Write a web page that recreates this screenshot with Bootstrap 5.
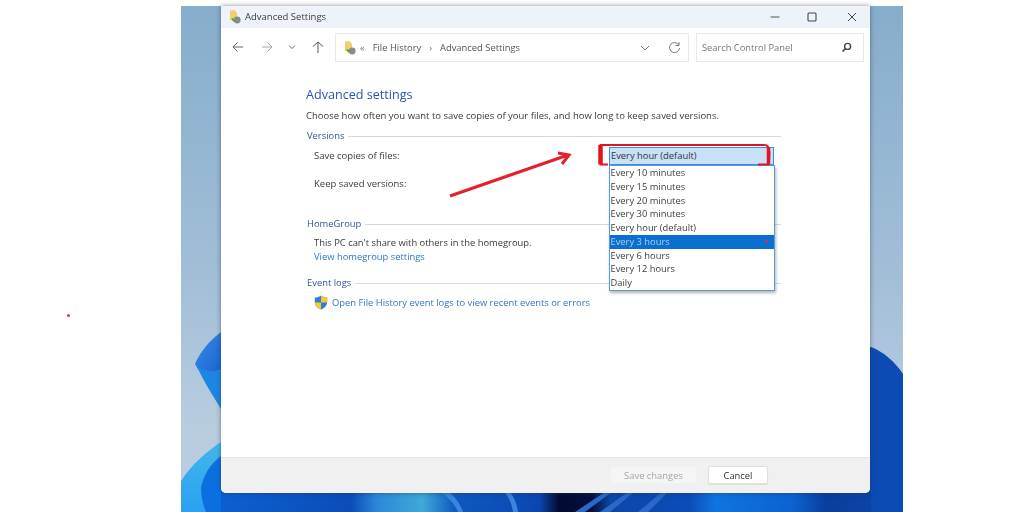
<!DOCTYPE html>
<html lang="en">
<head>
<meta charset="utf-8">
<title>Advanced Settings</title>
<link rel="stylesheet" href="https://cdn.jsdelivr.net/npm/bootstrap@5.3.0/dist/css/bootstrap.min.css">
<style>
html,body{height:512px;overflow:hidden;background:#fff}
body{font-family:"Open Sans","Noto Sans",sans-serif;font-size:9.4px;line-height:14px;color:#3a3a3a;position:relative}
.stray-dot{position:absolute;left:66.500px;top:313.500px;width:3px;height:3px;border-radius:50%;background:#e8303a}
.desk{position:absolute;left:181px;top:6px;width:722px;height:506px}
.wall{position:absolute;inset:0;width:722px;height:506px}
.win{position:relative;margin-left:40px;width:649px;height:487px;background:#fff;border-radius:0 0 5px 5px;box-shadow:0 0 5px rgba(40,50,70,.55);overflow:hidden;filter:blur(.3px)}
.tbar{height:22px;background:#eef3f9;padding-left:8px;font-size:9.5px}
.tbar-title{margin-left:4px}
.ctl{position:absolute;top:5px;width:12px;height:12px}
.ctl-min{left:548px}.ctl-max{left:585px}.ctl-close{left:625px}
.navline{height:39px;padding-top:5px}
.navbtns{width:114px;height:29px}
.navslot{position:absolute;top:12px;width:14px;height:14px}
.nav-back{left:10px}.nav-fwd{left:39px}.nav-down{left:64px}.nav-up{left:90px}
.addr{width:354px;height:29px;border:1px solid #e6e9ed;padding:0 0 0 8px;position:relative}
.addr-down{position:absolute;left:303px;top:8px}
.addr-ref{position:absolute;left:332px;top:7px}
.srch{width:168px;height:29px;border:1px solid #e6e9ed;margin-left:7px;padding:0 11px 0 5px;color:#777;font-size:9.3px}
.crumb{color:#555}
.mainpane{padding-left:85px;position:relative}
.pg-title{font-size:12.6px;line-height:16px;color:#2a52b3;font-weight:400;margin:20px 0 0}
.pg-desc{margin:6px 0 0;line-height:14px;font-size:9.51px}
.grp{color:#33549f;font-size:9.4px;line-height:14px;padding-left:1px;margin-right:89px}
.grp-1{margin-top:6px}.grp-2{margin-top:26px}.grp-3{margin-top:12px}
.grp-line{height:1px;background:#d6d9dd;margin-left:4px;flex:1 1 auto}
.indent{padding-left:8px}
.gap-hg{margin-top:5px}.gap-ev{margin-top:5px}
.link-hg{color:#2f78c4;text-decoration:none}
.sel-row{position:relative;height:34px;padding-top:6px;font-size:9.5px}
.keep-row{font-size:9.5px}
.sel{position:absolute;left:303px;top:4px;width:165px;height:18px;background:#c6e1f8;border:1px solid #3f8edb;padding-left:1px;line-height:16px;color:#333;font-size:9.35px}
.opts{position:absolute;left:303px;top:22px;width:166px;z-index:3;background:#fff;border:1px solid #5b9bd8;border-radius:0;box-shadow:1px 2px 3px rgba(0,0,0,.3)}
.opts .list-group-item{border:0;border-radius:0;padding:0 0 0 .5px;height:13.75px;line-height:13.75px;background:transparent;color:#3e3e3e;font-size:9.35px}
.opts .list-group-item.now{background:#0a6fd1;color:#a9cdf0;position:relative}
.reddot{position:absolute;right:6px;top:5px;width:3px;height:3px;border-radius:50%;background:#e22b3a}
.bracket{position:absolute;left:292px;top:1px;width:174px;height:22px;z-index:4;overflow:visible}
.callout{position:absolute;left:144px;top:4px;width:124px;height:54px;overflow:visible;z-index:2}
.foot{height:36px;background:#f0f0f0;border-top:1px solid #e6e6e6;padding-top:8px;padding-right:102px}
.foot .btn{height:18px;padding:1px 0 0;font-size:9.4px;line-height:16px;border-radius:2px}
.btn-save{width:87px;background:#f5f5f5;border:1px solid #f0f0f0;color:#a5a5a5}
.btn-save.disabled{opacity:1;background:#f5f5f5;color:#a5a5a5;border-color:#f0f0f0}
.btn-cancel{width:60px;margin-left:11px;background:#fff;border:1px solid #e0e0e0;color:#333;box-shadow:0 1px 1px rgba(0,0,0,.08)}
</style>
</head>
<body>
<div class="stray-dot"></div>
<div class="desk">
  <svg class="wall" viewBox="181 6 722 506" aria-hidden="true">
    <defs>
      <linearGradient id="sky" x1="0" y1="0" x2="0" y2="1"><stop offset="0" stop-color="#86adcb"/><stop offset=".55" stop-color="#a3bfd8"/><stop offset=".85" stop-color="#bacde0"/></linearGradient>
      <linearGradient id="petal" x1="0" y1="0" x2="1" y2="1"><stop offset="0" stop-color="#3b8fe6"/><stop offset="1" stop-color="#1a63d2"/></linearGradient>
      <linearGradient id="lowl" x1="0" y1="0" x2="0" y2="1"><stop offset="0" stop-color="#41b6ea"/><stop offset="1" stop-color="#2aa1f2"/></linearGradient>
      <linearGradient id="floor" x1="0" y1="0" x2="1" y2="0">
        <stop offset="0" stop-color="#0c5fd0"/><stop offset=".2" stop-color="#0b4cb8"/><stop offset=".24" stop-color="#2d88d8"/><stop offset=".31" stop-color="#3fa9d8"/><stop offset=".36" stop-color="#0f58c0"/><stop offset=".49" stop-color="#0b46b0"/><stop offset=".52" stop-color="#020b33"/><stop offset=".57" stop-color="#02103c"/><stop offset=".6" stop-color="#0c47a8"/><stop offset=".72" stop-color="#0b4cb8"/><stop offset=".76" stop-color="#0f74e0"/><stop offset=".88" stop-color="#0c62d0"/><stop offset=".93" stop-color="#0a3e9e"/><stop offset="1" stop-color="#0c43a6"/>
      </linearGradient>
    </defs>
    <rect x="181" y="6" width="722" height="506" fill="url(#sky)"/>
    <path d="M871 347C884 352 895 362 903 374V512H850V347Z" fill="#0c4ab4"/>
    <path d="M221 332C210 340 200 352 195 364L198 369C207 372 214 372 221 370Z" fill="url(#petal)"/>
    <path d="M197 367C204 371 213 372 221 370V409C213 396 204 382 197 367Z" fill="#1d86e2"/>
    <path d="M181 481C192 464 206 452 221 442V512H181Z" fill="url(#lowl)"/>
    <path d="M221 456C210 464 203 476 201 488C201 497 203 505 206 512H240V456Z" fill="#0b6fe0"/>
    <rect x="221" y="490" width="650" height="22" fill="url(#floor)"/>
    <path d="M575 512L605 492H612L585 512ZM600 512L628 492H634L610 512ZM638 512L662 492H668L648 512Z" fill="#2c68c8"/>
    <path d="M440 492C450 498 455 505 458 512H463C460 504 456 497 448 492ZM504 492C510 498 512 505 513 512H518C517 504 514 497 510 492Z" fill="#3a86dc"/>
  </svg>
  <div class="win d-flex flex-column">
    <div class="tbar d-flex align-items-center flex-shrink-0">
      <svg width="12" height="14" viewBox="0 0 12 14"><path d="M1 .5L5.500 0 8 3v7H1z" fill="#f2cf6b"/><circle cx="8.200" cy="10" r="3.400" fill="#858c8a"/><path d="M3 8.500l2.200 2.600" stroke="#3fa03f" stroke-width="1.800" fill="none"/></svg>
      <span class="tbar-title">Advanced Settings</span>
      <svg class="ctl ctl-min" viewBox="0 0 12 12"><path d="M1.500 6h9" stroke="#555" stroke-width="1"/></svg>
      <svg class="ctl ctl-max" viewBox="0 0 12 12"><rect x="2" y="2" width="8" height="8" rx="1" fill="none" stroke="#444" stroke-width="1.100"/></svg>
      <svg class="ctl ctl-close" viewBox="0 0 12 12"><path d="M2 2l8 8M10 2l-8 8" stroke="#444" stroke-width="1"/></svg>
    </div>
    <div class="navline d-flex flex-shrink-0 position-relative">
      <div class="navbtns"></div>
      <svg class="navslot nav-back" viewBox="0 0 14 14"><path d="M12 7H2M6.500 2.500L2 7l4.500 4.500" fill="none" stroke="#666" stroke-width="1"/></svg>
      <svg class="navslot nav-fwd" viewBox="0 0 14 14"><path d="M2 7h10M7.500 2.500L12 7l-4.500 4.500" fill="none" stroke="#a6a6a6" stroke-width="1"/></svg>
      <svg class="navslot nav-down" viewBox="0 0 14 14"><path d="M4 5.500L7 8.500l3-3" fill="none" stroke="#666" stroke-width="1"/></svg>
      <svg class="navslot nav-up" viewBox="0 0 14 14"><path d="M7 13V2M2 6.500L7 2l5 4.500" fill="none" stroke="#555" stroke-width="1"/></svg>
      <div class="addr d-flex align-items-center crumb flex-shrink-0">
        <svg width="12" height="14" viewBox="0 0 12 14"><path d="M1 .5L5.500 0 8 3v7H1z" fill="#f2cf6b"/><circle cx="8.200" cy="10" r="3.400" fill="#858c8a"/><path d="M3 8.500l2.200 2.600" stroke="#3fa03f" stroke-width="1.800" fill="none"/></svg>
        <span class="ms-1 me-2 text-secondary">«</span><span>File History</span>
        <span class="mx-2 text-secondary">›</span><span>Advanced Settings</span>
        <svg class="addr-down" width="12" height="12" viewBox="0 0 12 12"><path d="M2 4l4 4 4-4" fill="none" stroke="#777" stroke-width="1"/></svg>
        <svg class="addr-ref" width="13" height="13" viewBox="0 0 13 13"><path d="M10.800 4A5 5 0 1 0 11.500 7" fill="none" stroke="#777" stroke-width="1"/><path d="M11 1v3.500H7.500" fill="none" stroke="#777" stroke-width="1"/></svg>
      </div>
      <div class="srch d-flex align-items-center justify-content-between flex-shrink-0">
        <span>Search Control Panel</span>
        <svg width="11" height="11" viewBox="0 0 11 11"><circle cx="6.600" cy="4.400" r="3" fill="none" stroke="#444" stroke-width="1.400"/><path d="M4.400 6.600L1.500 9.500" stroke="#444" stroke-width="1.600"/></svg>
      </div>
    </div>
    <main class="mainpane flex-grow-1">
      <h1 class="pg-title">Advanced settings</h1>
      <p class="pg-desc">Choose how often you want to save copies of your files, and how long to keep saved versions.</p>
      <div class="grp grp-1 d-flex align-items-center"><span>Versions</span><span class="grp-line"></span></div>
      <div class="position-relative">
        <div class="sel-row indent">Save copies of files:
          <div class="sel">Every hour (default)</div>
          <svg class="bracket" viewBox="0 0 174 22"><path d="M10 20.500H2.500V1H166C170 1 171 3 171.500 9C171.500 14 171 18 170.500 20.500H160" fill="none" stroke="#e2151f" stroke-width="1.800"/><path d="M2.500 1V20.500" stroke="#e2151f" stroke-width="4.500"/><path d="M170.500 3V20" stroke="#e2151f" stroke-width="3.500"/></svg>
          <ul class="opts list-group">
            <li class="list-group-item">Every 10 minutes</li>
            <li class="list-group-item">Every 15 minutes</li>
            <li class="list-group-item">Every 20 minutes</li>
            <li class="list-group-item">Every 30 minutes</li>
            <li class="list-group-item">Every hour (default)</li>
            <li class="list-group-item now">Every 3 hours<span class="reddot"></span></li>
            <li class="list-group-item">Every 6 hours</li>
            <li class="list-group-item">Every 12 hours</li>
            <li class="list-group-item">Daily</li>
          </ul>
        </div>
        <div class="indent keep-row">Keep saved versions:</div>
        <svg class="callout" viewBox="0 0 124 54"><path d="M0 49L118 8M108 6L119 8L112 17" fill="none" stroke="#e6202b" stroke-width="3"/></svg>
      </div>
      <div class="grp grp-2 d-flex align-items-center"><span>HomeGroup</span><span class="grp-line"></span></div>
      <div class="indent gap-hg">This PC can't share with others in the homegroup.</div>
      <div class="indent"><a class="link-hg" href="#">View homegroup settings</a></div>
      <div class="grp grp-3 d-flex align-items-center"><span>Event logs</span><span class="grp-line"></span></div>
      <div class="indent gap-ev d-flex align-items-center">
        <svg width="14" height="15" viewBox="0 0 14 15"><path d="M7 .5C5 2 3 2.500 .8 2.500V7c0 3.500 2.500 6 6.200 7.500 3.700-1.500 6.200-4 6.200-7.500V2.500C11 2.500 9 2 7 .5z" fill="#2d7fd6"/><path d="M7 .5C9 2 11 2.500 13.200 2.500V7.500H7zM7 7.500V14.500C3.300 13 .8 11 .8 7.500z" fill="#f5c92f"/></svg>
        <a class="link-hg ms-1" href="#">Open File History event logs to view recent events or errors</a>
      </div>
    </main>
    <div class="foot d-flex justify-content-end flex-shrink-0">
      <button type="button" class="btn btn-save disabled">Save changes</button>
      <button type="button" class="btn btn-cancel">Cancel</button>
    </div>
  </div>
</div>
<script src="https://cdn.jsdelivr.net/npm/bootstrap@5.3.0/dist/js/bootstrap.bundle.min.js"></script>
</body>
</html>
